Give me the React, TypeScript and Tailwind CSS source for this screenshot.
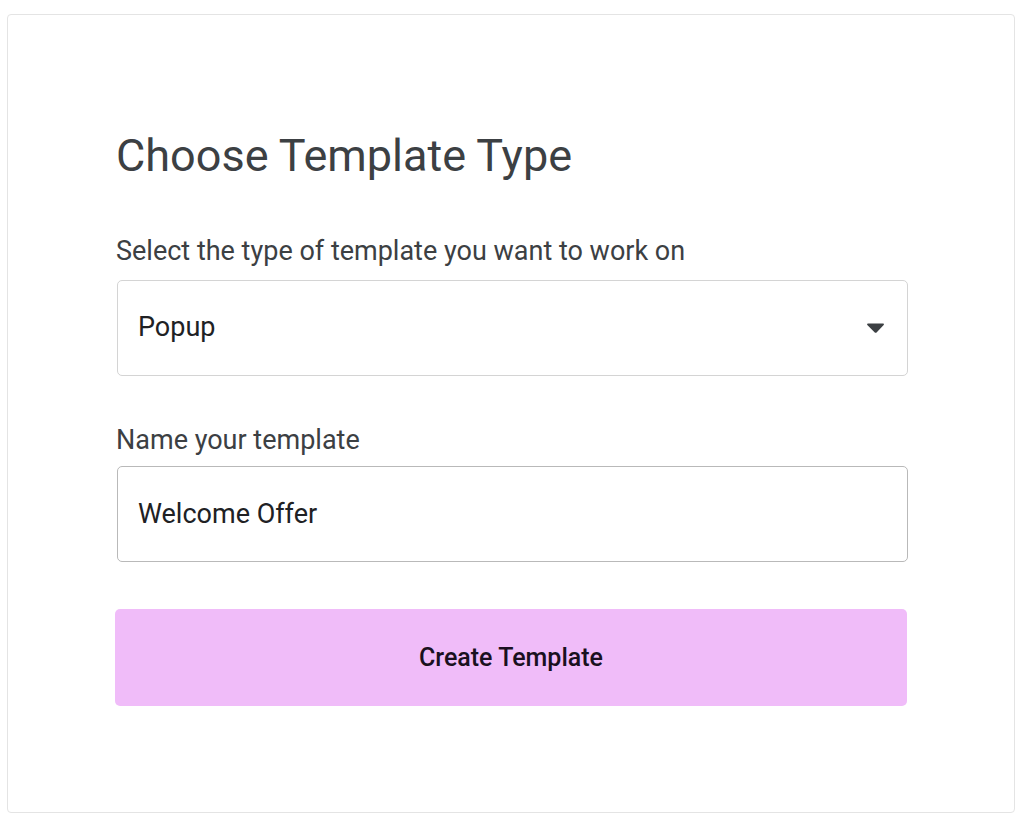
export default function App() {
  return (
    <div className="min-h-screen bg-white pl-[7px] pt-[14px] font-['Roboto',sans-serif]">
      <div className="flex h-[799px] w-[1008px] flex-col rounded-[4px] border border-[#e4e4e4] bg-white pl-[108px] pr-[106px] pt-[118px]">
        <h1 className="text-[45px] leading-none text-[#3c4043]">Choose Template Type</h1>

        <label className="mt-[60px] text-[27px] leading-none text-[#3c4043]">
          Select the type of template you want to work on
        </label>
        <div className="mt-[14.5px] ml-[1px] flex h-[96px] items-center justify-between rounded-[5px] border border-[#d4d4d4] pl-[20px] pr-[23px]">
          <span className="text-[27px] text-[#202124]">Popup</span>
          <svg width="17" height="10" viewBox="0 0 17 10" className="text-[#3c4043]">
            <path d="M1 0.5h15c0.8 0 1.2 0.9 0.7 1.5l-6.9 7.2c-0.7 0.7-1.6 0.7-2.3 0L0.3 2C-0.2 1.4 0.2 0.5 1 0.5z" fill="currentColor" />
          </svg>
        </div>

        <label className="mt-[51px] text-[27px] leading-none text-[#3c4043]">Name your template</label>
        <div className="mt-[12.5px] ml-[1px] flex h-[96px] items-center rounded-[5px] border border-[#b9b9b9] pl-[20px]">
          <span className="text-[27px] text-[#202124]">Welcome Offer</span>
        </div>

        <button className="mt-[47px] -ml-px h-[97px] w-[792px] rounded-[5px] bg-[#f0bcf9] text-[25px] font-medium text-[#1a1020]">
          Create Template
        </button>
      </div>
    </div>
  );
}
